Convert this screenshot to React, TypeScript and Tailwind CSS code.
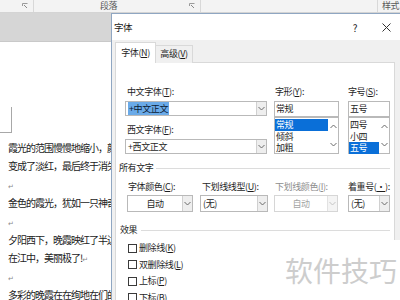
import clsx from 'clsx';
import type { ReactNode } from 'react';

const Chevron = ({ dir = 'down', color = '#6b6b6b' }: { dir?: 'up' | 'down'; color?: string }) => (
  <svg width="7" height="5" viewBox="0 0 7 5">
    <polyline
      points={dir === 'down' ? '0.5,1 3.5,4 6.5,1' : '0.5,4 3.5,1 6.5,4'}
      fill="none"
      stroke={color}
      strokeWidth="1"
    />
  </svg>
);

const Launcher = () => (
  <svg width="6" height="6" viewBox="0 0 6 6">
    <polyline points="0.5,3 0.5,0.5 5.5,0.5" fill="none" stroke="#9a9a9a" strokeWidth="1" />
    <polyline points="2,2 5,5 M5,3 5,5 3,5" fill="none" stroke="#8a8a8a" strokeWidth="1" />
  </svg>
);

interface ComboProps {
  className?: string;
  children?: ReactNode;
  disabled?: boolean;
  center?: boolean;
}

const Combo = ({ className, children, disabled, center }: ComboProps) => (
  <div className={clsx('flex border bg-white', disabled ? 'border-[#d6d6d6]' : 'border-[#b9b9b9]', className)}>
    <div
      className={clsx(
        'flex flex-1 items-center overflow-hidden whitespace-nowrap',
        center ? 'justify-center' : 'pl-[2px]',
        disabled && 'text-[#a3a3a3]',
      )}
    >
      {children}
    </div>
    <div
      className={clsx(
        'flex w-[10px] items-center justify-center border-l',
        disabled ? 'border-[#e2e2e2] bg-[#f4f4f4]' : 'border-[#d0d0d0] bg-[#eeeeee]',
      )}
    >
      <Chevron color={disabled ? '#c4c4c4' : '#6b6b6b'} />
    </div>
  </div>
);

const ListBox = ({ items, selected }: { items: string[]; selected: number }) => (
  <div className="flex h-[37px] border border-[#b9b9b9] bg-white">
    <div className="flex flex-1 flex-col pt-px">
      {items.map((it, i) => (
        <div
          key={it}
          className={clsx('h-[11.5px] pl-px leading-[11.5px]', i === selected && 'bg-[#0a6fd8] text-white')}
        >
          {it}
        </div>
      ))}
    </div>
    <div className="flex w-[10px] flex-col items-center justify-between py-[6px]">
      <Chevron dir="up" />
      <Chevron />
    </div>
  </div>
);

const Check = ({ children }: { children: ReactNode }) => (
  <div className="flex h-[16.5px] items-center pl-[12px]">
    <div className="h-[9px] w-[9px] border border-[#3a3a3a] bg-white" />
    <span className="ml-[2px] leading-[12px]">{children}</span>
  </div>
);

const Mark = () => <span className="font-['DejaVu_Sans',sans-serif] text-[7px] text-[#8a8a8a]">↵</span>;

const docLines: ReactNode[] = [
  '霞光的范围慢慢地缩小，颜色由深红',
  '变成了淡红，最后终于消失了。',
  <Mark key="m1" />,
  '金色的霞光，犹如一只神奇的画笔，',
  <Mark key="m2" />,
  '夕阳西下，晚霞映红了半边天，倒映',
  <>
    在江中，美丽极了!<Mark />
  </>,
  <Mark key="m3" />,
  '多彩的晚霞在在绚地在们的天边',
];

export default function App() {
  return (
    <div className="relative h-[300px] w-[400px] overflow-hidden bg-white font-['Noto_Sans_CJK_SC',sans-serif] text-[#1e1e1e]">
      {/* ribbon */}
      <div className="flex h-[13px] items-center border-b border-[#d4d4d4] bg-[#f3f3f3] text-[9px] leading-[12px] text-[#5a5a5a]">
        <div className="ml-[22px] flex h-full items-center">
          <Launcher />
        </div>
        <div className="ml-[5px] h-full w-px bg-[#d8d8d8]" />
        <span className="ml-[66px] tracking-[-0.5px]">段落</span>
        <div className="ml-[72px] flex h-full items-center">
          <Launcher />
        </div>
        <div className="ml-[5px] h-full w-px bg-[#d8d8d8]" />
        <div className="ml-[176px] h-full w-px bg-[#d8d8d8]" />
        <span className="ml-[4px] tracking-[-0.5px]">样式</span>
      </div>
      <div className="h-[29px] border-b border-[#c9c9c9] bg-[#d6d6d6]" />

      {/* document page */}
      <div className="pt-[65px]">
        <div className="h-[26px] w-[12px] border-b border-r border-[#a8a8a8]" />
        <div className="mt-[6px] pl-[8px] text-[10px] tracking-[-1px] text-[#222]">
          {docLines.map((line, i) => (
            <div key={i} className="h-[18.4px] whitespace-nowrap leading-[18.4px]">
              {line}
            </div>
          ))}
        </div>
      </div>

      {/* font dialog */}
      <div className="absolute left-[111px] top-[13px] h-[300px] w-[297px] border border-[#8fa6c2] bg-[#f0f0f0] text-[9px] tracking-[-0.4px]">
        <div className="flex h-[26px] items-center bg-white pr-[16px] text-[#1a1a1a]">
          <span className="flex-1 pl-[2px] text-[9.5px]">字体</span>
          <span className="text-[10px]">?</span>
          <svg className="ml-[25px]" width="9" height="9" viewBox="0 0 9 9">
            <path d="M0.5,0.5 L8.5,8.5 M8.5,0.5 L0.5,8.5" stroke="#333" strokeWidth="1" />
          </svg>
        </div>

        <div className="pl-[3px] pt-[2px]">
          <div className="flex h-[21px] items-end">
            <div className="relative z-10 flex h-[21px] w-[41px] items-center justify-center border-l border-r border-t border-[#d9d9d9] bg-white pb-px">
              字体(<u>N</u>)
            </div>
            <div className="flex h-[18px] w-[37px] items-center justify-center border-r border-t border-[#d9d9d9] bg-[#f0f0f0] pb-[2px]">
              高级(<u>V</u>)
            </div>
          </div>

          <div className="-mt-px h-[260px] w-[280px] border border-[#d9d9d9] bg-white">
            {/* fonts */}
            <div className="flex pt-[23px]">
              <div className="ml-[9px] w-[142px]">
                <div className="h-[12px] pl-[2px] leading-[12px]">
                  中文字体(<u>T</u>):
                </div>
                <Combo className="mt-[3px] h-[15px]">
                  <span className="bg-[#6aaae8] px-px text-[#0b1a33]">+中文正文</span>
                </Combo>
                <div className="mt-[8px] h-[12px] pl-[2px] leading-[12px]">
                  西文字体(<u>F</u>):
                </div>
                <Combo className="mt-[3px] h-[15px]">+西文正文</Combo>
              </div>

              <div className="ml-[7px] w-[65px]">
                <div className="h-[12px] pl-px leading-[12px]">
                  字形(<u>Y</u>):
                </div>
                <div className="mt-[3px] flex h-[16px] items-center border border-[#b9b9b9] bg-white pl-px">常规</div>
                <ListBox items={['常规', '倾斜', '加粗']} selected={0} />
              </div>

              <div className="ml-[9px] w-[42px]">
                <div className="h-[12px] leading-[12px]">
                  字号(<u>S</u>):
                </div>
                <div className="mt-[3px] flex h-[16px] items-center border border-[#b9b9b9] bg-white pl-px">五号</div>
                <ListBox items={['四号', '小四', '五号']} selected={2} />
              </div>
            </div>

            {/* all text */}
            <div className="mt-[8px] flex h-[12px] items-center pl-[3px] pr-[4px]">
              <span className="leading-[12px]">所有文字</span>
              <div className="ml-[3px] h-px flex-1 bg-[#dcdcdc]" />
            </div>

            <div className="mt-[7px] flex h-[12px] leading-[12px]">
              <div className="ml-[12px] w-[74px]">
                字体颜色(<u>C</u>):
              </div>
              <div className="w-[73px]">
                下划线线型(<u>U</u>):
              </div>
              <div className="w-[73px] text-[#8d8d8d]">
                下划线颜色(<u>I</u>):
              </div>
              <div>
                着重号(<u>·</u>):
              </div>
            </div>

            <div className="mt-[2px] flex h-[17px]">
              <Combo className="ml-[11px] w-[66px]" center>
                自动
              </Combo>
              <Combo className="ml-[7px] w-[68px]">(无)</Combo>
              <Combo className="ml-[6px] w-[64px]" center disabled>
                自动
              </Combo>
              <Combo className="ml-[10px] w-[42px]">(无)</Combo>
            </div>

            {/* effects */}
            <div className="mt-[12px] flex h-[12px] items-center pl-[4px] pr-[4px]">
              <span className="leading-[12px]">效果</span>
              <div className="ml-[4px] h-px flex-1 bg-[#dcdcdc]" />
            </div>
            <div className="mt-[4px]">
              <Check>
                删除线(<u>K</u>)
              </Check>
              <Check>
                双删除线(<u>L</u>)
              </Check>
              <Check>
                上标(<u>P</u>)
              </Check>
              <Check>
                下标(<u>B</u>)
              </Check>
            </div>
          </div>
        </div>
      </div>

      {/* watermark */}
      <div className="absolute left-[200px] top-[240px] flex h-[60px] w-[200px] items-center justify-end bg-white pr-[3px] text-[28px] leading-none text-[#cdcdcd]">
        软件技巧
      </div>
    </div>
  );
}
